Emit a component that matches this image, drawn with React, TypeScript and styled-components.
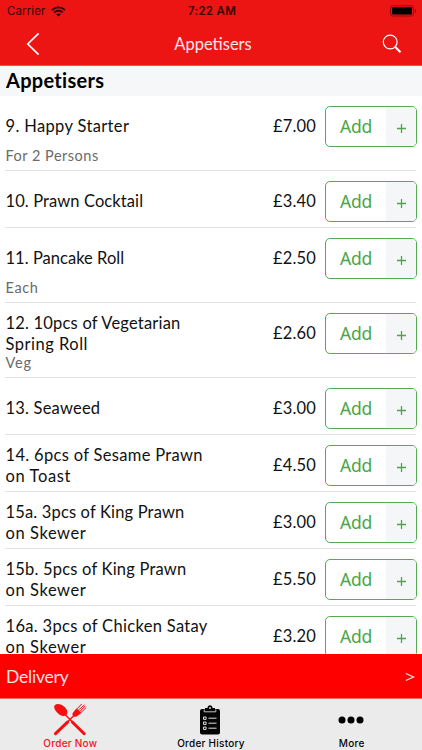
import React from "react";
import styled, { createGlobalStyle } from "styled-components";

const GlobalStyle = createGlobalStyle`
  * { box-sizing: border-box; }
  html, body { margin: 0; padding: 0; background: #fff; }
  body { font-family: Lato, "Open Sans", sans-serif; color: #111; overflow: hidden; }
`;

const Screen = styled.div`
  width: 422px;
  height: 750px;
  display: flex;
  flex-direction: column;
  overflow: hidden;
  background: #fff;
`;

const TopBar = styled.header`
  flex: none;
  height: 66px;
  background: #ed1414;
  border-bottom: 1px solid #f0504f;
`;

const StatusBar = styled.div`
  height: 22px;
  display: grid;
  grid-template-columns: 1fr auto 1fr;
  align-items: center;
  padding: 0 5px 0 7px;
  font: 400 11.5px/22px Inter, sans-serif;
  color: #3b0505;
`;

const Carrier = styled.div`
  display: flex;
  align-items: center;
  gap: 6px;
  letter-spacing: 0.1px;
`;

const Clock = styled.div`
  font-weight: 600;
  letter-spacing: 0.3px;
`;

const Battery = styled.div`
  display: flex;
  justify-content: flex-end;
`;

const NavBar = styled.nav`
  height: 43px;
  display: grid;
  grid-template-columns: 66px 1fr 60px;
  align-items: center;
  justify-items: center;
  color: #fff;
`;

const NavTitle = styled.div`
  font-size: 16.5px;
  line-height: 22px;
  padding-right: 4px;
  margin-left: 2px;
  color: #ffe9e9;
`;

const SectionTitle = styled.h1`
  flex: none;
  margin: 0;
  height: 30px;
  padding-left: 6px;
  background: #f6f7f9;
  color: #000;
  font-size: 20px;
  font-weight: 700;
  line-height: 28px;
  letter-spacing: 0.3px;
`;

const List = styled.main`
  flex: 1;
  min-height: 0;
  overflow: hidden;
`;

const Row = styled.section<{ $tall: boolean }>`
  height: ${(p) => (p.$tall ? 75 : 57)}px;
  margin: 0 6px 0 5px;
  padding-top: 10px;
  border-bottom: 1px solid #e1e1e2;
`;

const RowMain = styled.div`
  height: 41px;
  display: grid;
  grid-template-columns: 230px 1fr 91px;
  align-items: center;
`;

const NameLine = styled.div<{ $track: number }>`
  padding-left: 0.5px;
  font-size: 16.5px;
  line-height: 20.4px;
  white-space: nowrap;
  letter-spacing: ${(p) => p.$track}px;
`;

const Price = styled.div`
  font-size: 16.5px;
  line-height: 20px;
  text-align: right;
  padding: 0 9px 1px 0;
  letter-spacing: 0.15px;
`;

const Note = styled.div<{ $track: number }>`
  padding-left: 0.5px;
  font-size: 14.5px;
  line-height: 18px;
  color: #6a6a6a;
  letter-spacing: ${(p) => p.$track}px;
`;

const AddButton = styled.button`
  height: 41px;
  width: 92px;
  margin: 0;
  padding: 0;
  display: flex;
  overflow: hidden;
  border: 1px solid #55ab51;
  border-radius: 5px;
  background: #fff;
  color: #4aa646;
  font-family: "Noto Sans", sans-serif;
`;

const AddLabel = styled.span`
  width: 60px;
  font-size: 17.5px;
  line-height: 38px;
  font-weight: 400;
  text-align: center;
  letter-spacing: -0.2px;
`;

const AddPlus = styled.span`
  flex: 1;
  display: grid;
  place-items: center;
  background: #f4f6f8;
  padding-top: 3px;
`;

const DeliveryBar = styled.div`
  flex: none;
  height: 45px;
  padding: 1px 7px 0 6px;
  display: flex;
  align-items: center;
  justify-content: space-between;
  background: #fe0000;
  border-bottom: 1px solid #f56b6b;
  color: #ffe3e3;
  font-size: 17.5px;
  letter-spacing: -0.2px;
`;

const Tabs = styled.footer`
  flex: none;
  height: 51px;
  display: grid;
  grid-template-columns: repeat(3, 1fr);
  background: #ebebeb;
`;

const Tab = styled.div<{ $active?: boolean }>`
  display: flex;
  flex-direction: column;
  align-items: center;
  color: ${(p) => (p.$active ? "#f5141a" : "#050505")};
  font: 500 10px/13px Inter, sans-serif;
  letter-spacing: 0.25px;
`;

const TabIcon = styled.div`
  height: 38px;
  display: flex;
  align-items: center;
  padding: 3px 1px 0 0;
`;

type Line = [text: string, track: number];
type Item = { lines: Line[]; price: string; note?: Line };

const items: Item[] = [
  { lines: [["9. Happy Starter", 0.35]], price: "£7.00", note: ["For 2 Persons", 0.5] },
  { lines: [["10. Prawn Cocktail", 0.1]], price: "£3.40" },
  { lines: [["11. Pancake Roll", 0.03]], price: "£2.50", note: ["Each", 0.6] },
  { lines: [["12. 10pcs of Vegetarian", 0.2], ["Spring Roll", 0.5]], price: "£2.60", note: ["Veg", 0.8] },
  { lines: [["13. Seaweed", 0.2]], price: "£3.00" },
  { lines: [["14. 6pcs of Sesame Prawn", 0.32], ["on Toast", 0.6]], price: "£4.50" },
  { lines: [["15a. 3pcs of King Prawn", 0.16], ["on Skewer", 0.58]], price: "£3.00" },
  { lines: [["15b. 5pcs of King Prawn", 0.2], ["on Skewer", 0.58]], price: "£5.50" },
  { lines: [["16a. 3pcs of Chicken Satay", 0.32], ["on Skewer", 0.58]], price: "£3.20" },
];

const WifiIcon = () => (
  <svg width="15" height="11" viewBox="0 0 15 11" fill="none" stroke="#240000" strokeWidth="1.9">
    <path d="M1 4.1C4.7.5 10.3.5 14 4.1" />
    <path d="M3.3 6.5c2.4-2.3 6-2.3 8.4 0" />
    <path d="M7.5 10.6 5.2 8.3c1.3-1.2 3.3-1.2 4.6 0Z" fill="#240000" stroke="none" />
  </svg>
);

const BatteryIcon = () => (
  <svg width="27" height="12" viewBox="0 0 27 12">
    <rect x=".6" y=".8" width="22.8" height="10.2" rx="2.2" fill="none" stroke="#8b0d0d" />
    <rect x="2" y="2.2" width="20" height="7.4" rx="1" fill="#000" />
    <path d="M24.8 4v4c1.7-.5 1.7-3.5 0-4Z" fill="#8b0d0d" />
  </svg>
);

const BackIcon = () => (
  <svg width="14" height="24" viewBox="0 0 14 24" fill="none" stroke="#fff" strokeWidth="1.7">
    <path d="M12.6 1.3 1.8 12l10.8 10.7" />
  </svg>
);

const SearchIcon = () => (
  <svg width="20" height="20" viewBox="0 0 20 20" fill="none" stroke="#fff">
    <circle cx="8.2" cy="8" r="6.9" strokeWidth="1.2" />
    <path d="m12.8 12.6 5.7 5.7" strokeWidth="2.1" />
  </svg>
);

const PlusIcon = () => (
  <svg width="9" height="9" viewBox="0 0 9 9" stroke="#4aa646" strokeWidth="1.3">
    <path d="M0 4.5h9M4.5 0v9" />
  </svg>
);

const CutleryIcon = () => (
  <svg width="34" height="33" viewBox="0 0 34 33" fill="#fa0d10" stroke="#fa0d10">
    <path d="M2 2C4 0 8.5.9 11.6 4c2.8 2.8 3.5 5.600 2.200 7.500 0 0-1.500 1.600-3.200 1.600-2 .1-4.200-1.200-6-3.100C1.500 7 .3 3.800 2 2Z" stroke="none" />
    <path d="m11.500 11 9 9" strokeWidth="1.400" />
    <path d="m19.500 19.200 11.700 11.500M14.500 19.200 2.500 30.700" strokeWidth="3" strokeLinecap="round" />
    <path d="m13.500 20 8.500-8.500" strokeWidth="1.500" />
    <path d="M20.200 9.300c-1.300 1.700-.8 3.200.3 4s2.800.8 4.200-.5l3.400-3.400-4.600-4Z" stroke="none" />
    <path d="m22.500 7.400 6-6.200M24 8.500l7.100-6.400M25.500 9.800 32 3.200M26.500 11l6.400-6.200" strokeWidth="1" strokeLinecap="round" />
  </svg>
);

const ClipboardIcon = () => (
  <svg width="20" height="30" viewBox="0 0 20 30">
    <path d="M2 4h3V3h2.500C7.500-.6 12.500-.6 12.500 3H15v1h3a2 2 0 0 1 2 2v21.500a2 2 0 0 1-2 2H2a2 2 0 0 1-2-2V6a2 2 0 0 1 2-2Z" fill="#050505" />
    <circle cx="10" cy="3" r=".9" fill="#ebebeb" />
    <path d="M4.200 4.500v2.300h11.600V4.500" fill="none" stroke="#d8d8d8" strokeWidth=".9" />
    <path d="M3.500 12h2.600v2.400H3.500zM3.500 17h2.600v2.400H3.500zM3.500 22h2.600v2.400H3.500zM8.500 13.200h8M8.500 18.200h8M8.500 23.200h8" fill="none" stroke="#ddd" />
  </svg>
);

const MoreIcon = () => (
  <svg width="26" height="8" viewBox="0 0 26 8" fill="#000">
    <circle cx="4" cy="4" r="3.500" />
    <circle cx="13" cy="4" r="3.500" />
    <circle cx="22" cy="4" r="3.500" />
  </svg>
);

const ForwardIcon = () => (
  <svg width="10" height="10" viewBox="0 0 10 10" fill="none" stroke="#ffe3e3" strokeWidth="1.300">
    <path d="m.8 1.500 7.700 3.500L.8 8.500" />
  </svg>
);

export default function App() {
  return (
    <Screen>
      <GlobalStyle />
      <TopBar>
        <StatusBar>
          <Carrier>Carrier <WifiIcon /></Carrier>
          <Clock>7:22 AM</Clock>
          <Battery><BatteryIcon /></Battery>
        </StatusBar>
        <NavBar>
          <BackIcon />
          <NavTitle>Appetisers</NavTitle>
          <SearchIcon />
        </NavBar>
      </TopBar>
      <SectionTitle>Appetisers</SectionTitle>
      <List>
        {items.map((item) => (
          <Row key={item.lines[0][0]} $tall={Boolean(item.note)}>
            <RowMain>
              <div>
                {item.lines.map(([text, track]) => (
                  <NameLine key={text} $track={track}>{text}</NameLine>
                ))}
              </div>
              <Price>{item.price}</Price>
              <AddButton>
                <AddLabel>Add</AddLabel>
                <AddPlus><PlusIcon /></AddPlus>
              </AddButton>
            </RowMain>
            {item.note && <Note $track={item.note[1]}>{item.note[0]}</Note>}
          </Row>
        ))}
      </List>
      <DeliveryBar><span>Delivery</span><ForwardIcon /></DeliveryBar>
      <Tabs>
        <Tab $active><TabIcon><CutleryIcon /></TabIcon>Order Now</Tab>
        <Tab><TabIcon><ClipboardIcon /></TabIcon>Order History</Tab>
        <Tab><TabIcon><MoreIcon /></TabIcon>More</Tab>
      </Tabs>
    </Screen>
  );
}
